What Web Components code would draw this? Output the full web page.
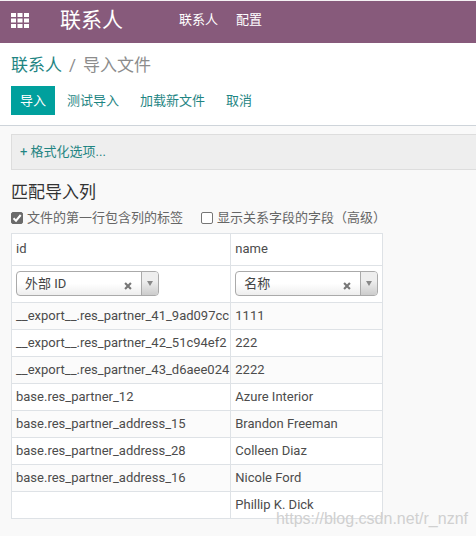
<!DOCTYPE html>
<html lang="zh-CN">
<head>
<meta charset="utf-8">
<meta name="viewport" content="width=device-width, initial-scale=1">
<title>联系人 - 导入文件</title>
<style>
  body {
    margin: 0;
    min-height: 100vh;
    background: #f9f9f9;
    color: #4c4c4c;
    font: 13px/18px Roboto, "Noto Sans CJK SC", sans-serif;
    --brand: #875a7b;
    --primary: #00a09d;
    --link: #1f8583;
    --line: #dee2e6;
  }
</style>
</head>
<body>
<import-page></import-page>

<script>
/** Top bar: apps launcher, app name, menu entries in the slot */
class AppNavbar extends HTMLElement {
  constructor() {
    super();
    this.attachShadow({ mode: 'open' });
  }

  connectedCallback() {
    this.shadowRoot.innerHTML = `
      <style>
        :host { display: block; background: var(--brand); border-top: 1px solid #f4f0f3; color: #fff; }
        nav { display: flex; align-items: center; height: 38px; padding: 0 11px 4px; }
        button { display: flex; border: 0; padding: 0; background: none; color: inherit; cursor: pointer; }
        .brand { margin: 0 56px 0 31px; color: inherit; font-size: 21px; line-height: 30px; text-decoration: none; }
        .menu { display: flex; gap: 18px; }
        ::slotted(a) { color: #fff; text-decoration: none; }
      </style>
      <nav>
        <button type="button" aria-label="应用">
          <svg width="18" height="15" viewBox="0 0 18 15" fill="currentColor" aria-hidden="true">
            <rect x="0" y="0" width="5" height="4"/><rect x="6.5" y="0" width="5" height="4"/><rect x="13" y="0" width="5" height="4"/>
            <rect x="0" y="5.5" width="5" height="4"/><rect x="6.5" y="5.5" width="5" height="4"/><rect x="13" y="5.5" width="5" height="4"/>
            <rect x="0" y="11" width="5" height="4"/><rect x="6.5" y="11" width="5" height="4"/><rect x="13" y="11" width="5" height="4"/>
          </svg>
        </button>
        <a class="brand" href="#">${this.getAttribute('app')}</a>
        <div class="menu"><slot></slot></div>
      </nav>
    `;
  }
}

/** Breadcrumb and action buttons */
class ControlPanel extends HTMLElement {
  constructor() {
    super();
    this.attachShadow({ mode: 'open' });
  }

  connectedCallback() {
    this.shadowRoot.innerHTML = `
      <style>
        :host { display: block; padding: 8px 11px 10px; background: #fff; border-bottom: 1px solid #ced4da; }
        .crumbs { display: flex; gap: 7px; font-size: 17px; line-height: 28px; color: #8c8c8c; }
        .crumbs a { color: var(--link); text-decoration: none; }
        .actions { display: flex; gap: 3px; margin-top: 7px; }
      </style>
      <div class="crumbs"><a href="#">${this.getAttribute('parent')}</a><span>/</span><span>${this.getAttribute('current')}</span></div>
      <div class="actions"><slot></slot></div>
    `;
  }
}

class ActionButton extends HTMLElement {
  constructor() {
    super();
    this.attachShadow({ mode: 'open' });
  }

  connectedCallback() {
    this.shadowRoot.innerHTML = `
      <style>
        :host { display: block; }
        button { height: 29px; padding: 0 9px; border: 0; background: none; color: var(--link); font: inherit; cursor: pointer; }
        :host([primary]) button { background: var(--primary); color: #fff; }
      </style>
      <button type="button"><slot></slot></button>
    `;
  }
}

class CheckOption extends HTMLElement {
  constructor() {
    super();
    this.attachShadow({ mode: 'open' });
  }

  connectedCallback() {
    this.shadowRoot.innerHTML = `
      <style>
        :host { display: block; color: #666; }
        label { display: flex; align-items: center; gap: 4px; white-space: nowrap; }
        span { display: flex; position: relative; }
        input { appearance: none; width: 12px; height: 12px; margin: 0; border: 1px solid #767676; border-radius: 2px; background: #fff; }
        input:checked { background: #6b6b6b; border-color: #6b6b6b; }
        svg { position: absolute; inset: 0; pointer-events: none; visibility: hidden; }
        input:checked + svg { visibility: visible; }
      </style>
      <label>
        <span>
          <input type="checkbox" ${this.hasAttribute('checked') ? 'checked' : ''}>
          <svg width="12" height="12" viewBox="0 0 12 12" fill="none" stroke="#fff" stroke-width="2" aria-hidden="true"><path d="M2.5 6.3 5 8.7 9.7 3"/></svg>
        </span>
        <slot></slot>
      </label>
    `;
  }
}

/** Field picker: a select with a clear button and an arrow box */
class FieldSelect extends HTMLElement {
  constructor() {
    super();
    this.attachShadow({ mode: 'open' });
  }

  connectedCallback() {
    this.shadowRoot.innerHTML = `
      <style>
        :host { display: block; position: relative; width: 143px; }
        select {
          appearance: none; display: block; width: 100%; height: 25px; padding: 0 44px 0 8px;
          border: 1px solid #aaa; border-radius: 4px; color: #444; font: inherit;
          background: linear-gradient(#fff 50%, #eee);
        }
        .clear { position: absolute; right: 27px; top: 11px; display: flex; padding: 0; border: 0; background: none; }
        .arrow {
          position: absolute; right: 1px; top: 1px; bottom: 1px; width: 16px;
          display: flex; align-items: center; justify-content: center;
          border-left: 1px solid #aaa; border-radius: 0 3px 3px 0;
          background: linear-gradient(#eee 40%, #ccc); pointer-events: none;
        }
      </style>
      <select aria-label="${this.getAttribute('label')}"><option>${this.getAttribute('value')}</option></select>
      <button class="clear" type="button" aria-label="清除">
        <svg width="8" height="8" viewBox="0 0 9 9" stroke="#777" stroke-width="2.4" aria-hidden="true"><path d="M1.2 1.2 7.8 7.8M7.8 1.2 1.2 7.8"/></svg>
      </button>
      <div class="arrow">
        <svg width="6" height="5" viewBox="0 0 6 5" fill="#888" aria-hidden="true"><path d="M0 0h6L3 5z"/></svg>
      </div>
    `;
  }
}

/** Preview of the file: header, field matching row, records */
class ImportTable extends HTMLElement {
  constructor() {
    super();
    this.attachShadow({ mode: 'open' });
    this._rows = [
      ['__export__.res_partner_41_9ad097cc', '1111'],
      ['__export__.res_partner_42_51c94ef2', '222'],
      ['__export__.res_partner_43_d6aee024', '2222'],
      ['base.res_partner_12', 'Azure Interior'],
      ['base.res_partner_address_15', 'Brandon Freeman'],
      ['base.res_partner_address_28', 'Colleen Diaz'],
      ['base.res_partner_address_16', 'Nicole Ford'],
      ['', 'Phillip K. Dick']
    ];
  }

  connectedCallback() {
    this.shadowRoot.innerHTML = `
      <style>
        :host { display: block; }
        table { border-collapse: collapse; background: #fff; }
        th, td { height: 18px; padding: 4px; border: 1px solid var(--line); font-weight: 400; text-align: left; white-space: nowrap; }
        th:first-child, td:first-child { padding-right: 1px; }
        .names th { padding-top: 6px; padding-bottom: 7px; }
        .match td { padding-top: 5px; padding-bottom: 6px; }
        tbody tr:nth-child(odd) { background: #fbfbfb; }
      </style>
      <table>
        <thead>
          <tr class="names"><th scope="col">id</th><th scope="col">name</th></tr>
          <tr class="match">
            <td><field-select label="id" value="外部 ID"></field-select></td>
            <td><field-select label="name" value="名称"></field-select></td>
          </tr>
        </thead>
        <tbody>
          ${this._rows.map(r => `<tr><td>${r[0]}</td><td>${r[1]}</td></tr>`).join('')}
        </tbody>
      </table>
    `;
  }
}

class ImportPage extends HTMLElement {
  constructor() {
    super();
    this.attachShadow({ mode: 'open' });
  }

  connectedCallback() {
    this.shadowRoot.innerHTML = `
      <style>
        :host { display: block; position: relative; min-height: 100vh; }
        main { padding: 8px 0 17px 11px; }
        .format { padding: 8px; border: 1px solid #ddd; border-right: 0; background: #eee; }
        .format a { color: var(--link); text-decoration: none; }
        h2 { margin: 9px 0 4px; color: #333; font-size: 17px; line-height: 26px; font-weight: 400; }
        .options { display: flex; gap: 18px; margin-bottom: 6px; }
        .mark { position: absolute; right: 8px; bottom: 7px; color: #d0d0d0; font: 16px/20px "Liberation Sans", Arial, sans-serif; }
      </style>
      <app-navbar app="联系人"><a href="#">联系人</a><a href="#">配置</a></app-navbar>
      <control-panel parent="联系人" current="导入文件">
        <action-button primary>导入</action-button>
        <action-button>测试导入</action-button>
        <action-button>加载新文件</action-button>
        <action-button>取消</action-button>
      </control-panel>
      <main>
        <div class="format"><a href="#">+ 格式化选项...</a></div>
        <h2>匹配导入列</h2>
        <div class="options">
          <check-option checked>文件的第一行包含列的标签</check-option>
          <check-option>显示关系字段的字段（高级）</check-option>
        </div>
        <import-table></import-table>
      </main>
      <span class="mark">https://blog.csdn.net/r_nznf</span>
    `;
  }
}

customElements.define('app-navbar', AppNavbar);
customElements.define('control-panel', ControlPanel);
customElements.define('action-button', ActionButton);
customElements.define('check-option', CheckOption);
customElements.define('field-select', FieldSelect);
customElements.define('import-table', ImportTable);
customElements.define('import-page', ImportPage);
</script>
</body>
</html>
